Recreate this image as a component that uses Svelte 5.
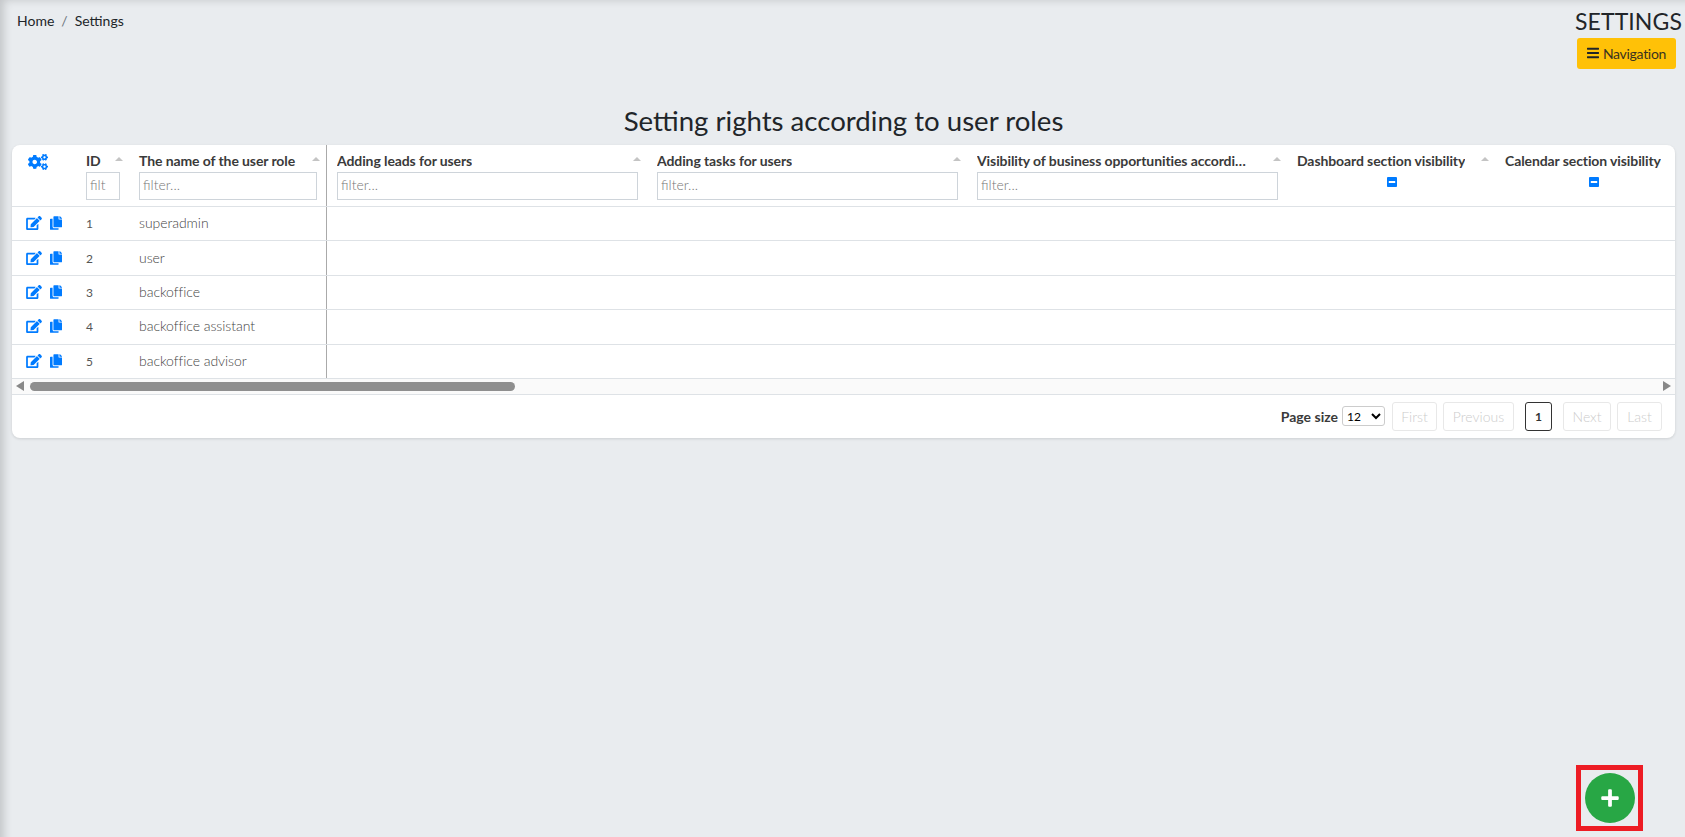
<script>
	const columns = [
		{ title: 'Adding leads for users', filter: true },
		{ title: 'Adding tasks for users', filter: true },
		{ title: 'Visibility of business opportunities according to user', filter: true },
		{ title: 'Dashboard section visibility', check: true },
		{ title: 'Calendar section visibility', check: true }
	];

	const roles = ['superadmin', 'user', 'backoffice', 'backoffice assistant', 'backoffice advisor'];

	const icons = {
		cogs: { box: '0 0 640 512', d: 'M512.1 191l-8.2 14.3c-3 5.3-9.4 7.5-15.1 5.4-11.8-4.4-22.6-10.7-32.1-18.6-4.6-3.8-5.8-10.5-2.8-15.7l8.2-14.3c-6.9-8-12.3-17.3-15.9-27.4h-16.5c-6 0-11.2-4.3-12.2-10.3-2-12-2.1-24.6 0-37.1 1-6 6.2-10.4 12.2-10.4h16.5c3.6-10.1 9-19.4 15.9-27.4l-8.2-14.3c-3-5.2-1.9-11.9 2.8-15.7 9.5-7.9 20.4-14.2 32.1-18.6 5.7-2.1 12.1.1 15.1 5.4l8.2 14.3c10.5-1.9 21.2-1.9 31.7 0L552 6.3c3-5.3 9.4-7.5 15.1-5.4 11.8 4.4 22.6 10.7 32.1 18.6 4.6 3.8 5.8 10.5 2.8 15.7l-8.2 14.3c6.9 8 12.3 17.3 15.9 27.4h16.5c6 0 11.2 4.3 12.2 10.3 2 12 2.1 24.6 0 37.1-1 6-6.2 10.4-12.2 10.4h-16.5c-3.6 10.1-9 19.4-15.9 27.4l8.2 14.3c3 5.2 1.9 11.9-2.8 15.7-9.5 7.9-20.4 14.2-32.1 18.6-5.7 2.1-12.1-.1-15.1-5.4l-8.2-14.3c-10.4 1.9-21.2 1.9-31.7 0zm-10.5-58.8c38.5 29.6 82.4-14.3 52.8-52.8-38.5-29.7-82.4 14.3-52.8 52.8zM386.3 286.1l33.7 16.8c10.1 5.8 14.5 18.1 10.5 29.1-8.9 24.2-26.4 46.4-42.6 65.8-7.4 8.9-20.2 11.1-30.3 5.3l-29.1-16.8c-16 13.7-34.6 24.6-54.9 31.7v33.6c0 11.6-8.3 21.6-19.7 23.6-24.6 4.2-50.4 4.4-75.9 0-11.5-2-20-11.9-20-23.6V418c-20.3-7.2-38.9-18-54.9-31.7L74 403c-10 5.8-22.9 3.6-30.3-5.3-16.2-19.4-33.3-41.6-42.2-65.7-4-10.9.4-23.2 10.5-29.1l33.3-16.8c-3.9-20.9-3.9-42.4 0-63.4L12 205.8c-10.1-5.8-14.6-18.1-10.5-29 8.9-24.2 26-46.4 42.2-65.8 7.4-8.9 20.2-11.1 30.3-5.3l29.1 16.8c16-13.7 34.6-24.6 54.9-31.7V57.1c0-11.5 8.2-21.5 19.6-23.5 24.6-4.2 50.5-4.4 76-.1 11.5 2 20 11.9 20 23.6v33.6c20.3 7.2 38.9 18 54.9 31.7l29.1-16.8c10-5.8 22.9-3.6 30.3 5.3 16.2 19.4 33.2 41.6 42.1 65.8 4 10.9.1 23.2-10 29.1l-33.7 16.8c3.9 21 3.9 42.5 0 63.5zm-117.6 21.1c59.2-77-28.7-164.9-105.7-105.7-59.2 77 28.7 164.9 105.7 105.7zm243.4 182.7l-8.2 14.3c-3 5.3-9.4 7.5-15.1 5.4-11.8-4.4-22.6-10.7-32.1-18.6-4.6-3.8-5.8-10.5-2.8-15.7l8.2-14.3c-6.9-8-12.3-17.3-15.9-27.4h-16.5c-6 0-11.2-4.3-12.2-10.3-2-12-2.1-24.6 0-37.1 1-6 6.2-10.4 12.2-10.4h16.5c3.6-10.1 9-19.4 15.9-27.4l-8.2-14.3c-3-5.2-1.9-11.9 2.8-15.7 9.5-7.9 20.4-14.2 32.1-18.6 5.7-2.1 12.1.1 15.1 5.4l8.2 14.3c10.5-1.9 21.2-1.9 31.7 0l8.2-14.3c3-5.3 9.4-7.5 15.1-5.4 11.8 4.4 22.6 10.7 32.1 18.6 4.6 3.8 5.8 10.5 2.8 15.7l-8.2 14.3c6.9 8 12.3 17.3 15.9 27.4h16.5c6 0 11.2 4.3 12.2 10.3 2 12 2.1 24.6 0 37.1-1 6-6.2 10.4-12.2 10.4h-16.5c-3.6 10.1-9 19.4-15.9 27.4l8.2 14.3c3 5.2 1.9 11.9-2.8 15.7-9.5 7.9-20.4 14.2-32.1 18.6-5.7 2.1-12.1-.1-15.1-5.4l-8.2-14.3c-10.4 1.9-21.2 1.9-31.7 0zM501.6 431c38.5 29.6 82.4-14.3 52.8-52.8-38.5-29.6-82.4 14.3-52.8 52.8z' },
		edit: { box: '0 0 576 512', d: 'M402.6 83.2l90.2 90.2c3.8 3.8 3.8 10 0 13.8L274.4 405.6l-92.8 10.3c-12.4 1.4-22.9-9.1-21.5-21.5l10.3-92.8L388.8 83.2c3.8-3.8 10-3.8 13.8 0zm162-22.9l-48.8-48.8c-15.2-15.2-39.9-15.2-55.2 0l-35.4 35.4c-3.8 3.8-3.8 10 0 13.8l90.2 90.2c3.8 3.8 10 3.8 13.8 0l35.4-35.4c15.2-15.3 15.2-40 0-55.2zM384 346.2V448H64V128h229.8c3.2 0 6.2-1.3 8.5-3.5l40-40c7.6-7.6 2.2-20.5-8.5-20.5H48C21.5 64 0 85.5 0 112v352c0 26.5 21.5 48 48 48h352c26.5 0 48-21.5 48-48V306.2c0-10.7-12.9-16-20.5-8.5l-40 40c-2.2 2.3-3.5 5.3-3.5 8.5z' },
		copy: { box: '0 0 448 512', d: 'M320 448v40c0 13.255-10.745 24-24 24H24c-13.255 0-24-10.745-24-24V120c0-13.255 10.745-24 24-24h72v296c0 30.879 25.121 56 56 56h168zm0-344V0H152c-13.255 0-24 10.745-24 24v368c0 13.255 10.745 24 24 24h272c13.255 0 24-10.745 24-24V128H344c-13.2 0-24-10.8-24-24zm120.971-31.029L375.029 7.029A24 24 0 0 0 358.059 0H352v96h96v-6.059a24 24 0 0 0-7.029-16.97z' },
		bars: { box: '0 0 448 512', d: 'M16 132h416c8.837 0 16-7.163 16-16V76c0-8.837-7.163-16-16-16H16C7.163 60 0 67.163 0 76v40c0 8.837 7.163 16 16 16zm0 160h416c8.837 0 16-7.163 16-16v-40c0-8.837-7.163-16-16-16H16c-8.837 0-16 7.163-16 16v40c0 8.837 7.163 16 16 16zm0 160h416c8.837 0 16-7.163 16-16v-40c0-8.837-7.163-16-16-16H16c-8.837 0-16 7.163-16 16v40c0 8.837 7.163 16 16 16z' },
		minus: { box: '0 0 448 512', d: 'M400 32H48C21.5 32 0 53.5 0 80v352c0 26.5 21.5 48 48 48h352c26.5 0 48-21.5 48-48V80c0-26.5-21.5-48-48-48zM92 296c-6.6 0-12-5.4-12-12v-56c0-6.6 5.4-12 12-12h264c6.6 0 12 5.4 12 12v56c0 6.6-5.4 12-12 12H92z' },
		plus: { box: '0 0 448 512', d: 'M416 208H272V64c0-17.67-14.33-32-32-32h-32c-17.67 0-32 14.33-32 32v144H32c-17.67 0-32 14.33-32 32v32c0 17.67 14.33 32 32 32h144v144c0 17.67 14.33 32 32 32h32c17.67 0 32-14.33 32-32V304h144c17.67 0 32-14.33 32-32v-32c0-17.67-14.33-32-32-32z' }
	};
</script>

{#snippet icon(name, cls)}
	<svg class={cls} viewBox={icons[name].box} aria-hidden="true"><path fill="currentColor" d={icons[name].d} /></svg>
{/snippet}

<div class="page">
	<header class="top">
		<nav class="crumbs">
			<span>Home</span>
			<span class="sep">/</span>
			<span>Settings</span>
		</nav>
		<div class="top-right">
			<div class="section">SETTINGS</div>
			<button class="nav-btn" type="button">
				{@render icon('bars', 'i-bars')}
				Navigation
			</button>
		</div>
	</header>

	<h1>Setting rights according to user roles</h1>

	<section class="card">
		<div class="viewport">
			<div class="row head">
				<div class="cell action">{@render icon('cogs', 'i-cogs')}</div>
				<div class="cell hcell">
					<div class="htitle"><span>ID</span><i class="sort"></i></div>
					<input class="filter" placeholder="filt" />
				</div>
				<div class="cell hcell pinned">
					<div class="htitle"><span>The name of the user role</span><i class="sort"></i></div>
					<input class="filter" placeholder="filter..." />
				</div>
				{#each columns as col}
					<div class="cell hcell">
						<div class="htitle"><span class="clip">{col.title}</span><i class="sort"></i></div>
						{#if col.filter}
							<input class="filter" placeholder="filter..." />
						{/if}
						{#if col.check}
							<div class="check">{@render icon('minus', 'i-minus')}</div>
						{/if}
					</div>
				{/each}
			</div>

			{#each roles as role, i}
				<div class="row body">
					<div class="cell action">
						{@render icon('edit', 'i-edit')}
						{@render icon('copy', 'i-copy')}
					</div>
					<div class="cell num">{i + 1}</div>
					<div class="cell pinned name">{role}</div>
					{#each columns as _}
						<div class="cell"></div>
					{/each}
				</div>
			{/each}
		</div>

		<div class="scrollbar">
			<i class="arrow left"></i>
			<div class="track"><div class="thumb"></div></div>
			<i class="arrow right"></i>
		</div>

		<footer class="pager">
			<span class="size-label">Page size</span>
			<select class="size"><option>12</option></select>
			<button class="pg first" type="button" disabled>First</button>
			<button class="pg prev" type="button" disabled>Previous</button>
			<button class="pg current" type="button">1</button>
			<button class="pg next" type="button" disabled>Next</button>
			<button class="pg last" type="button" disabled>Last</button>
		</footer>
	</section>

	<div class="fab-mark">
		<button class="fab" type="button" aria-label="Add">{@render icon('plus', 'i-plus')}</button>
	</div>
</div>

<style>
	:global(body) {
		margin: 0;
		overflow: hidden;
		background: #e9ecef;
	}
	.page {
		position: relative;
		box-sizing: border-box;
		height: 837px;
		padding: 7px 3px 0 12px;
		font-family: Lato, 'Open Sans', sans-serif;
		color: #212529;
		background: #e9ecef;
		box-shadow: inset 9px 5px 9px -5px rgba(0, 0, 0, 0.16);
	}
	.top {
		display: flex;
		justify-content: space-between;
		align-items: flex-start;
	}
	.crumbs {
		display: flex;
		gap: 7px;
		margin: 6px 0 0 5px;
		font-size: 14px;
		line-height: 16px;
	}
	.sep {
		color: #6c757d;
	}
	.top-right {
		display: flex;
		flex-direction: column;
		align-items: flex-end;
	}
	.section {
		font-size: 23px;
		line-height: 29px;
		letter-spacing: 0.1px;
	}
	.nav-btn {
		display: flex;
		align-items: center;
		justify-content: center;
		gap: 4px;
		box-sizing: border-box;
		width: 99px;
		height: 31px;
		margin: 2px 6px 0 0;
		padding: 0 0 1px 0;
		border: 0;
		border-radius: 3px;
		background: #ffc107;
		color: #3a3320;
		font: inherit;
		font-size: 14px;
		letter-spacing: -0.3px;
	}
	.i-bars {
		width: 12px;
		height: 14px;
		color: #212529;
	}
	h1 {
		margin: 35px 7px 8px 0;
		font-size: 27.6px;
		line-height: 33px;
		font-weight: 400;
		text-align: center;
	}
	.card {
		margin-right: 7px;
		border-radius: 8px;
		background: #fff;
		box-shadow: 0 1px 3px rgba(0, 0, 0, 0.12);
		overflow: hidden;
	}
	.viewport {
		overflow: hidden;
	}
	.row {
		display: grid;
		grid-template-columns: 64px 53px 198px 320px 320px 320px 208px 196px;
		border-bottom: 1px solid #dee2e6;
		box-sizing: border-box;
	}
	.row.head {
		height: 62px;
	}
	.row.body {
		height: 34.4px;
	}
	.cell {
		box-sizing: border-box;
		min-width: 0;
	}
	.pinned {
		border-right: 1px solid #aaa;
	}
	.hcell {
		padding: 6px 9px 0 10px;
		position: relative;
	}
	.htitle {
		display: flex;
		align-items: center;
		height: 18px;
		font-size: 14px;
		font-weight: 700;
		letter-spacing: -0.1px;
		color: #3a3a3a;
		white-space: nowrap;
		margin-right: 3px;
	}
	.clip {
		overflow: hidden;
		text-overflow: ellipsis;
		max-width: 275px;
	}
	.sort {
		position: absolute;
		top: 12px;
		right: 6px;
		border: 4px solid transparent;
		border-top: 0;
		border-bottom: 4px solid #c4c4c4;
	}
	.filter {
		display: block;
		box-sizing: border-box;
		width: 100%;
		height: 28px;
		margin-top: 3px;
		padding: 0 3px 3px;
		border: 1px solid #ced4da;
		font: inherit;
		font-size: 14px;
		font-weight: 300;
		outline: 0;
	}
	.filter::placeholder {
		color: #777;
	}
	.check {
		display: flex;
		justify-content: center;
		margin-top: 7px;
		line-height: 0;
		color: #007bff;
	}
	.i-minus {
		width: 10px;
		height: 12px;
	}
	.action {
		display: flex;
		align-items: center;
		justify-content: flex-start;
		padding: 0 0 1px 14px;
		color: #007bff;
	}
	.head .action {
		align-items: flex-start;
		padding: 9px 0 0 16px;
	}
	.i-cogs {
		width: 20px;
		height: 16px;
	}
	.i-edit {
		width: 16px;
		height: 14px;
		margin-right: 8px;
	}
	.i-copy {
		width: 12px;
		height: 14px;
	}
	.num,
	.name {
		display: flex;
		align-items: center;
		padding: 0 0 2px 10px;
		color: #555;
	}
	.num {
		font-size: 12px;
		padding-bottom: 0;
	}
	.name {
		font-size: 14px;
		font-weight: 300;
		color: #444;
		letter-spacing: -0.05px;
	}
	.scrollbar {
		display: flex;
		align-items: center;
		gap: 5px;
		height: 16px;
		box-sizing: border-box;
		padding: 0 4px;
		border-bottom: 1px solid #dee2e6;
		background: #fafafa;
	}
	.arrow {
		flex: none;
		border: 5px solid transparent;
		width: 0;
		height: 0;
	}
	.arrow.left {
		border-left: 0;
		border-right: 8px solid #888;
	}
	.arrow.right {
		border-right: 0;
		border-left: 8px solid #888;
	}
	.track {
		flex: 1;
	}
	.thumb {
		width: 485px;
		height: 9px;
		margin-left: 1px;
		border-radius: 5px;
		background: #8f8f8f;
	}
	.pager {
		display: flex;
		align-items: center;
		justify-content: flex-end;
		height: 43px;
		padding-right: 13px;
	}
	.size-label {
		font-size: 14px;
		font-weight: 700;
		color: #3a3a3a;
		margin-right: 4px;
	}
	.size {
		width: 43px;
		height: 20px;
		margin-right: 7px;
		padding: 0;
		border: 1px solid #ccc;
		border-radius: 3px;
		background: #fff;
		font: inherit;
		font-size: 12px;
	}
	.pg {
		box-sizing: border-box;
		height: 29px;
		padding: 0;
		border: 1px solid #e8e8e8;
		border-radius: 3px;
		background: #fff;
		color: #ccc;
		font: inherit;
		font-size: 14px;
		font-weight: 300;
	}
	.first {
		width: 45px;
		margin-right: 6px;
	}
	.prev {
		width: 71px;
		margin-right: 11px;
	}
	.current {
		width: 27px;
		margin-right: 11px;
		border-color: #333;
		color: #333;
		font-size: 12px;
		font-weight: 700;
	}
	.next {
		width: 48px;
		margin-right: 6px;
	}
	.last {
		width: 45px;
	}
	.fab-mark {
		position: absolute;
		left: 1576px;
		top: 765px;
		box-sizing: border-box;
		width: 67px;
		height: 66px;
		border: 5px solid #ed1c24;
		display: flex;
		align-items: center;
		justify-content: center;
	}
	.fab {
		display: flex;
		align-items: center;
		justify-content: center;
		width: 50px;
		height: 50px;
		padding: 0;
		border: 0;
		border-radius: 50%;
		background: #28a745;
		color: #fff;
	}
	.i-plus {
		width: 18px;
		height: 20px;
	}
</style>
